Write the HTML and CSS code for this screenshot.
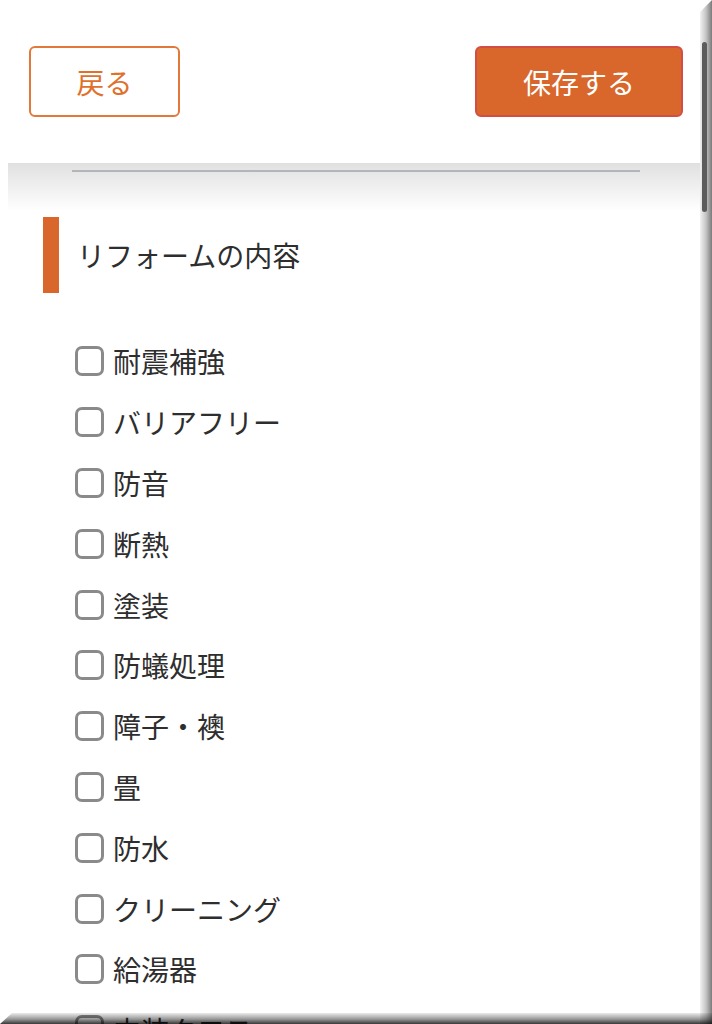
FILE: index.html
```html
<!DOCTYPE html>
<html lang="ja">
<head>
    <meta charset="UTF-8">
    <meta name="viewport" content="width=device-width, initial-scale=1.0">
    <title>リフォームの内容</title>
    <link rel="stylesheet" href="styles.css">
</head>
<body>
    <header class="top-bar">
        <button class="btn btn-back" type="button">戻る</button>
        <button class="btn btn-save" type="button">保存する</button>
    </header>

    <main class="content">
        <hr class="divider">

        <h2 class="section-title">リフォームの内容</h2>

        <ul class="check-list">
            <li><span class="box"></span>耐震補強</li>
            <li><span class="box"></span>バリアフリー</li>
            <li><span class="box"></span>防音</li>
            <li><span class="box"></span>断熱</li>
            <li><span class="box"></span>塗装</li>
            <li><span class="box"></span>防蟻処理</li>
            <li><span class="box"></span>障子・襖</li>
            <li><span class="box"></span>畳</li>
            <li><span class="box"></span>防水</li>
            <li><span class="box"></span>クリーニング</li>
            <li><span class="box"></span>給湯器</li>
            <li><span class="box"></span>内装クロス</li>
            <li><span class="box"></span>外構</li>
        </ul>
    </main>

    <!-- device frame edges + scrollbar -->
    <div class="edge-right"></div>
    <div class="edge-bottom"></div>
    <div class="scroll-thumb"></div>
</body>
</html>
```

FILE: styles.css
```css
html {
    overflow: hidden;
}
body {
    margin: 0;
    font-family: "Noto Sans CJK JP", "Noto Sans", sans-serif;
    color: #333;
    background-color: #fff;
}
.top-bar {
    position: relative;
    height: 163px;
    padding: 46px 29px 0 29px;
    box-sizing: border-box;
    display: flex;
    justify-content: space-between;
    align-items: flex-start;
    background-color: #fff;
}
/* soft shadow under the header */
.top-bar::after {
    content: "";
    position: absolute;
    top: 100%;
    left: 8px;
    right: 0;
    height: 48px;
    background: linear-gradient(to bottom, rgba(0, 0, 0, 0.12), rgba(0, 0, 0, 0));
    pointer-events: none;
    z-index: 1;
}
.btn {
    height: 71px;
    border-radius: 6px;
    font-family: inherit;
    font-size: 28px;
    line-height: 1;
    padding: 0;
    cursor: pointer;
}
.btn-back {
    width: 151px;
    background-color: #fff;
    border: 2px solid #e2793a;
    color: #e0702c;
}
.btn-save {
    width: 208px;
    background-color: #d9672b;
    border: 2px solid #d24e44;
    color: #fff;
}
.content {
    padding-top: 7px;
}
.divider {
    margin: 0 72px;
    border: 0;
    height: 2px;
    background-color: #c6cacf;
}
.section-title {
    margin: 45px 0 0 43px;
    height: 76px;
    border-left: 16px solid #d9672b;
    padding-left: 18px;
    display: flex;
    align-items: center;
    font-size: 28px;
    font-weight: normal;
    color: #2e2e2e;
}
.check-list {
    list-style: none;
    margin: 38px 0 0 0;
    padding: 0 0 0 75px;
}
.check-list li {
    height: 60.8px;
    display: flex;
    align-items: center;
    font-size: 28px;
    color: #2e2e2e;
}
.box {
    width: 29px;
    height: 30px;
    border: 3px solid #8a8a8a;
    border-radius: 7px;
    box-sizing: border-box;
    margin-right: 9px;
    flex-shrink: 0;
}
.edge-right {
    position: fixed;
    top: 0;
    right: 0;
    width: 12px;
    height: 100%;
    background: linear-gradient(to right, #f2f2f2, #c4c4c4 50%, #7a7a7a);
    clip-path: polygon(0 12px, 100% 0, 100% 100%, 0 100%);
    z-index: 5;
}
.edge-bottom {
    position: fixed;
    left: 0;
    bottom: 0;
    width: 100%;
    height: 11px;
    background: linear-gradient(to bottom, rgba(0, 0, 0, 0.08), rgba(0, 0, 0, 0.4) 55%, rgba(0, 0, 0, 0.78));
    clip-path: polygon(12px 0, 100% 0, 100% 100%, 0 100%);
    z-index: 6;
}
.scroll-thumb {
    position: fixed;
    top: 42px;
    right: 5px;
    width: 5px;
    height: 170px;
    border-radius: 3px;
    background-color: #5c5c5c;
    z-index: 7;
}
```
